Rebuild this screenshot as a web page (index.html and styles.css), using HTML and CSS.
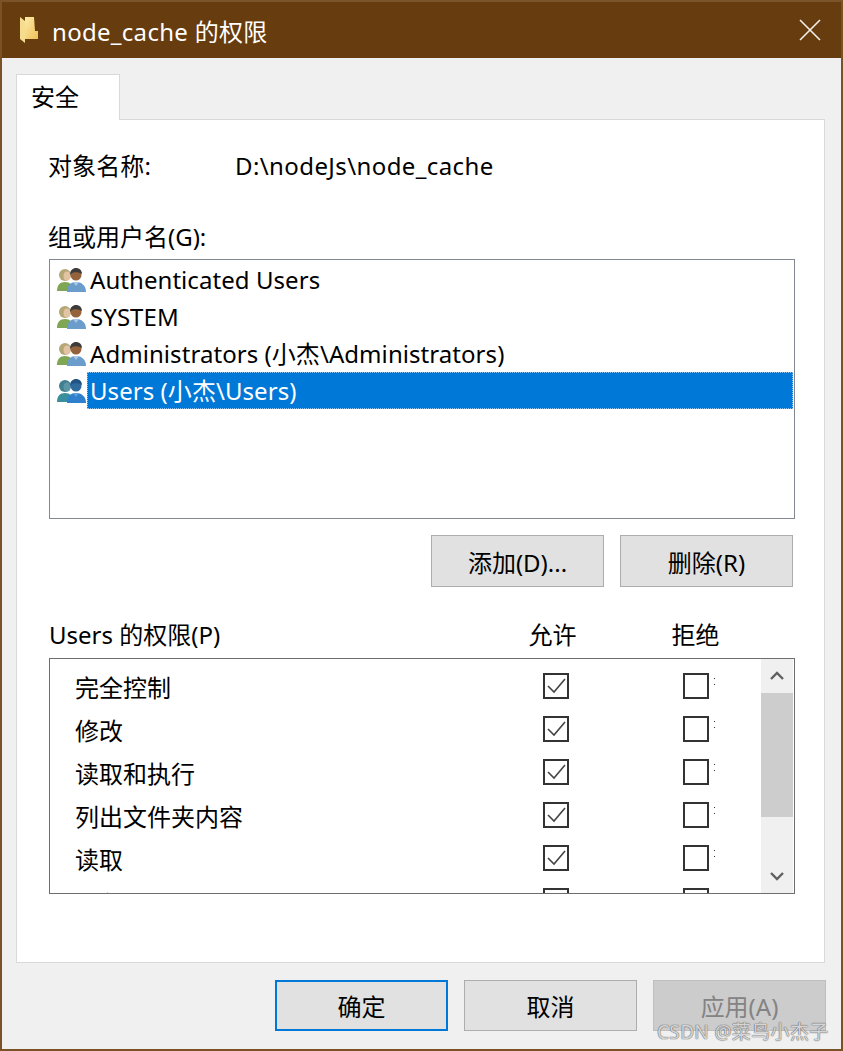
FILE: index.html
```html
<!DOCTYPE html>
<html>

<head>
    <meta charset="utf-8">
    <title>node_cache 的权限</title>
    <link rel="stylesheet" href="styles.css">
</head>

<body>
    <svg class="defs" width="0" height="0">
        <defs>
            <linearGradient id="folderFill" x1="0" y1="0" x2="1" y2="1">
                <stop offset="0" stop-color="#fdeaa8" />
                <stop offset="1" stop-color="#eebf58" />
            </linearGradient>
            <symbol id="people" viewBox="0 0 30 26">
                <path d="M1 24c0-6 3-9 8-9s8 3 8 9z" fill="#7fa653" />
                <circle cx="9" cy="8" r="6" fill="#b5a676" />
                <ellipse cx="11" cy="9" rx="3.5" ry="4.5" fill="#e2c3a2" />
                <path d="M11 25c0-7 4-10 9-10s10 3 10 10z" fill="#6a9ccc" />
                <path d="M17 15l3 4 3-4z" fill="#a9c8e6" />
                <circle cx="20" cy="8" r="5.5" fill="#94633c" />
                <path d="M14 8c0-5 3-7 6-7s6 2 6 6c-3-2-8-2-10-1z" fill="#3d3a3a" />
            </symbol>
            <symbol id="people-sel" viewBox="0 0 30 26">
                <path d="M1 24c0-6 3-9 8-9s8 3 8 9z" fill="#3a8f9c" />
                <circle cx="9" cy="8" r="6" fill="#3f7f90" />
                <ellipse cx="11" cy="9" rx="3.5" ry="4.5" fill="#5b96a8" />
                <path d="M11 25c0-7 4-10 9-10s10 3 10 10z" fill="#2f80cc" />
                <path d="M17 15l3 4 3-4z" fill="#5aa0dc" />
                <circle cx="20" cy="8" r="5.5" fill="#2f6a9c" />
                <path d="M14 8c0-5 3-7 6-7s6 2 6 6c-3-2-8-2-10-1z" fill="#1f5484" />
            </symbol>
            <symbol id="tick" viewBox="0 0 22 22">
                <path d="M3 11l6 6L20 4" fill="none" stroke="#444" stroke-width="1.6" />
            </symbol>
        </defs>
    </svg>

    <div class="window">
        <header class="titlebar">
            <svg class="folder" width="18" height="26" viewBox="0 0 18 26">
                <path d="M5 0h9l1 14h3v8H5z" fill="url(#folderFill)" />
                <path d="M0 0l5 4v22l-5-4z" fill="#f6dc8e" />
            </svg>
            <span class="title">node_cache 的权限</span>
            <svg class="close" width="22" height="22" viewBox="0 0 22 22">
                <path d="M1 1l20 20M21 1L1 21" stroke="#f4f0ec" stroke-width="1.6" fill="none" />
            </svg>
        </header>

        <div class="tabs">
            <div class="tab">安全</div>
        </div>

        <section class="panel">
            <div class="object-row">
                <span class="object-label">对象名称:</span>
                <span class="object-path">D:\nodeJs\node_cache</span>
            </div>

            <div class="group-label">组或用户名(G):</div>
            <ul class="userlist">
                <li><svg class="usericon"><use href="#people" /></svg><span class="username">Authenticated Users</span></li>
                <li><svg class="usericon"><use href="#people" /></svg><span class="username">SYSTEM</span></li>
                <li><svg class="usericon"><use href="#people" /></svg><span class="username">Administrators (小杰\Administrators)</span></li>
                <li><svg class="usericon"><use href="#people-sel" /></svg><span class="username selected">Users (小杰\Users)</span></li>
            </ul>

            <div class="user-actions">
                <button class="btn">添加(D)...</button>
                <button class="btn">删除(R)</button>
            </div>

            <div class="perm-head">
                <span class="perm-title">Users 的权限(P)</span>
                <span class="col-allow">允许</span>
                <span class="col-deny">拒绝</span>
            </div>
            <div class="permbox">
                <div class="permrows">
                    <div class="permrow"><span class="permname">完全控制</span><span class="check"><svg><use href="#tick" /></svg></span><span class="check deny"></span><span class="dots"></span></div>
                    <div class="permrow"><span class="permname">修改</span><span class="check"><svg><use href="#tick" /></svg></span><span class="check deny"></span><span class="dots"></span></div>
                    <div class="permrow"><span class="permname">读取和执行</span><span class="check"><svg><use href="#tick" /></svg></span><span class="check deny"></span><span class="dots"></span></div>
                    <div class="permrow"><span class="permname">列出文件夹内容</span><span class="check"><svg><use href="#tick" /></svg></span><span class="check deny"></span><span class="dots"></span></div>
                    <div class="permrow"><span class="permname">读取</span><span class="check"><svg><use href="#tick" /></svg></span><span class="check deny"></span><span class="dots"></span></div>
                    <div class="permrow"><span class="permname">写入</span><span class="check"></span><span class="check deny"></span><span class="dots"></span></div>
                </div>
                <div class="scrollbar">
                    <div class="arrow">
                        <svg width="16" height="10" viewBox="0 0 16 10"><path d="M2 8l6-6 6 6" fill="none" stroke="#606060" stroke-width="2.4" /></svg>
                    </div>
                    <div class="thumb"></div>
                    <div class="track"></div>
                    <div class="arrow">
                        <svg width="16" height="10" viewBox="0 0 16 10"><path d="M2 2l6 6 6-6" fill="none" stroke="#606060" stroke-width="2.4" /></svg>
                    </div>
                </div>
            </div>
        </section>

        <footer class="footer">
            <button class="btn primary">确定</button>
            <button class="btn">取消</button>
            <button class="btn disabled">应用(A)</button>
        </footer>

        <div class="watermark">CSDN @菜鸟小杰子</div>
    </div>
</body>

</html>
```

FILE: styles.css
```css
* {
    box-sizing: border-box;
}

html,
body {
    margin: 0;
    padding: 0;
}

body {
    font-family: "Noto Sans", "Noto Sans CJK SC", sans-serif;
    font-size: 24px;
    color: #000;
    background-color: #f0f0f0;
    overflow: hidden;
}

.defs {
    position: absolute;
}

.window {
    position: relative;
    width: 843px;
    height: 1051px;
    border: 2px solid #7a5225;
    border-top-color: #7b5529;
    background-color: #f0f0f0;
    overflow: hidden;
}

.titlebar {
    height: 56px;
    display: flex;
    align-items: center;
    padding: 0 20px 0 18px;
    background-color: #673c0e;
    color: #fff;
}

.folder {
    margin-right: 14px;
}

.title {
    flex: 1;
    letter-spacing: 0.3px;
}

.close {
    display: block;
}

.tabs {
    height: 61px;
    padding: 16px 0 0 14px;
}

.tab {
    width: 104px;
    height: 46px;
    padding-left: 14px;
    line-height: 44px;
    background-color: #fff;
    border: 1px solid #d9d9d9;
    border-bottom: 0;
    position: relative;
    z-index: 1;
}

.panel {
    height: 844px;
    margin: 0 16px 0 14px;
    padding: 26px 29px 0 32px;
    background-color: #fff;
    border: 1px solid #d9d9d9;
}

.object-row {
    display: flex;
    height: 40px;
    line-height: 40px;
    margin-left: -1px;
}

.object-label {
    width: 187px;
    letter-spacing: 0.1px;
}

.object-path {
    letter-spacing: 0.4px;
}

.group-label {
    margin: 31px 0 0 -1px;
    height: 40px;
    line-height: 40px;
}

.userlist {
    list-style: none;
    margin: 2px 0 0;
    padding: 1px 1px 0 0;
    height: 260px;
    border: 1px solid #828790;
}

.userlist li {
    display: flex;
    align-items: center;
    height: 37px;
    padding-left: 6px;
}

.usericon {
    width: 30px;
    height: 26px;
    flex: none;
    margin-right: 1px;
}

.username {
    display: block;
    flex: 1;
    height: 37px;
    line-height: 38px;
    padding-left: 3px;
    letter-spacing: 0.06px;
}

.username.selected {
    background-color: #0078d7;
    color: #fff;
    outline: 1px dotted #8ec4f0;
    outline-offset: -1px;
}

.user-actions {
    display: flex;
    justify-content: flex-end;
    gap: 16px;
    padding: 16px 2px 0 0;
}

.btn {
    width: 173px;
    height: 52px;
    padding: 0;
    font: inherit;
    color: #000;
    background-color: #e1e1e1;
    border: 1px solid #adadad;
}

.perm-head {
    display: flex;
    align-items: center;
    height: 40px;
    margin-top: 26px;
}

.perm-title {
    flex: 1;
}

.col-allow,
.col-deny {
    width: 143px;
    text-align: center;
}

.col-deny {
    margin-right: 28px;
}

.permbox {
    display: flex;
    height: 236px;
    margin-top: 5px;
    border: 1px solid #6e6e6e;
    overflow: hidden;
}

.permrows {
    flex: 1;
    padding-top: 5px;
}

.permrow {
    display: flex;
    align-items: center;
    height: 43px;
    padding-left: 25px;
}

.permname {
    width: 468px;
    padding-top: 2px;
}

.check {
    width: 26px;
    height: 26px;
    border: 2px solid #333;
    flex: none;
}

.check svg {
    display: block;
    width: 22px;
    height: 22px;
}

.check.deny {
    margin-left: 114px;
}

.dots {
    width: 1px;
    height: 7px;
    margin: -8px 0 0 5px;
    border-top: 1px solid #333;
    border-bottom: 1px solid #333;
}

.scrollbar {
    width: 32px;
    margin-right: 1px;
    display: flex;
    flex-direction: column;
    background-color: #f0f0f0;
}

.arrow {
    height: 34px;
    display: flex;
    align-items: center;
    justify-content: center;
}

.thumb {
    height: 124px;
    background-color: #cdcdcd;
}

.track {
    flex: 1;
    height: 42px;
}

.footer {
    display: flex;
    gap: 16px;
    padding: 17px 0 0 273px;
}

.footer .btn {
    height: 51px;
}

.btn.primary {
    border: 2px solid #0078d7;
}

.btn.disabled {
    background-color: #cccccc;
    border-color: #bfbfbf;
    color: #838383;
}

.watermark {
    position: absolute;
    left: 655px;
    top: 1017px;
    font-size: 19px;
    line-height: 26px;
    letter-spacing: 0.35px;
    color: rgba(255, 255, 255, 0.75);
    text-shadow: 0 0 1px #555, 0 0 1px #555;
    white-space: nowrap;
}
```
